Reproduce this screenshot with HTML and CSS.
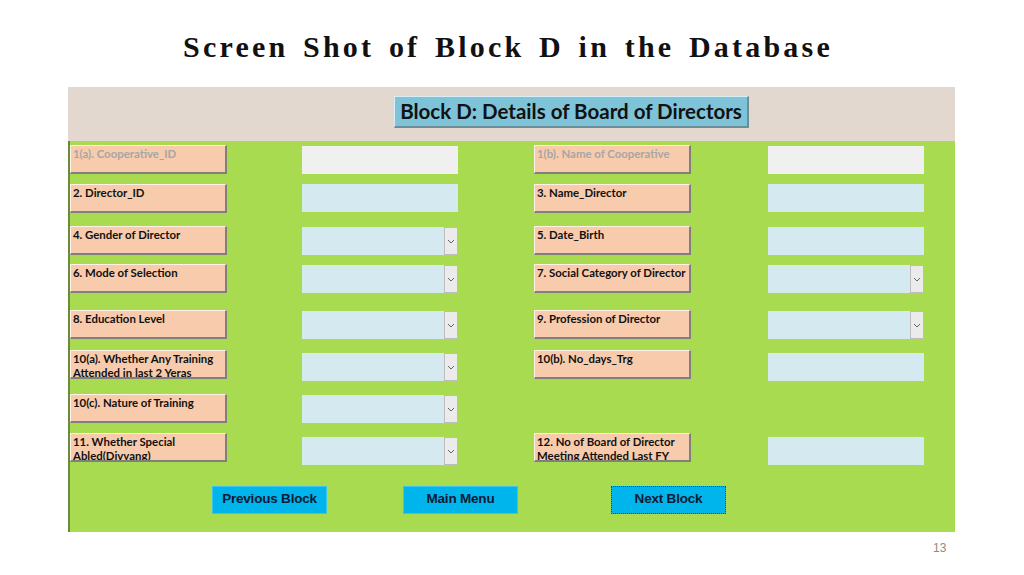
FILE: index.html
```html
<!DOCTYPE html>
<html>
<head>
<meta charset="utf-8">
<link rel="stylesheet" href="styles.css">
</head>
<body>
<h1 class="title">Screen Shot of Block D in the Database</h1>
<div class="panel">
  <div class="head">
    <div class="head-btn">Block D: Details of Board of Directors</div>
  </div>
  <div class="body">
    <div class="grid">
      <div class="lbl dis">1(a). Cooperative_ID</div>
      <div class="inp gray o1"></div>
      <div class="lbl dis">1(b). Name of Cooperative</div>
      <div class="inp gray o1"></div>

      <div class="lbl">2. Director_ID</div>
      <div class="inp"></div>
      <div class="lbl">3. Name_Director</div>
      <div class="inp"></div>

      <div class="lbl">4. Gender of Director</div>
      <div class="inp sel o1"><span class="dd"><svg width="8" height="5" viewBox="0 0 8 5"><polyline points="1,1 4,4 7,1" fill="none" stroke="#666" stroke-width="1"/></svg></span></div>
      <div class="lbl">5. Date_Birth</div>
      <div class="inp o1"></div>

      <div class="lbl">6. Mode of Selection</div>
      <div class="inp sel o1"><span class="dd"><svg width="8" height="5" viewBox="0 0 8 5"><polyline points="1,1 4,4 7,1" fill="none" stroke="#666" stroke-width="1"/></svg></span></div>
      <div class="lbl">7. Social Category of Director</div>
      <div class="inp sel o1"><span class="dd"><svg width="8" height="5" viewBox="0 0 8 5"><polyline points="1,1 4,4 7,1" fill="none" stroke="#666" stroke-width="1"/></svg></span></div>

      <div class="lbl">8. Education Level</div>
      <div class="inp sel o1"><span class="dd"><svg width="8" height="5" viewBox="0 0 8 5"><polyline points="1,1 4,4 7,1" fill="none" stroke="#666" stroke-width="1"/></svg></span></div>
      <div class="lbl">9. Profession of Director</div>
      <div class="inp sel o1"><span class="dd"><svg width="8" height="5" viewBox="0 0 8 5"><polyline points="1,1 4,4 7,1" fill="none" stroke="#666" stroke-width="1"/></svg></span></div>

      <div class="lbl">10(a). Whether Any Training Attended in last 2 Yeras</div>
      <div class="inp sel o3"><span class="dd"><svg width="8" height="5" viewBox="0 0 8 5"><polyline points="1,1 4,4 7,1" fill="none" stroke="#666" stroke-width="1"/></svg></span></div>
      <div class="lbl">10(b). No_days_Trg</div>
      <div class="inp o3"></div>

      <div class="lbl">10(c). Nature of Training</div>
      <div class="inp sel o1"><span class="dd"><svg width="8" height="5" viewBox="0 0 8 5"><polyline points="1,1 4,4 7,1" fill="none" stroke="#666" stroke-width="1"/></svg></span></div>
      <div></div>
      <div></div>

      <div class="lbl">11. Whether Special Abled(Divyang)</div>
      <div class="inp sel o4"><span class="dd"><svg width="8" height="5" viewBox="0 0 8 5"><polyline points="1,1 4,4 7,1" fill="none" stroke="#666" stroke-width="1"/></svg></span></div>
      <div class="lbl">12. No of Board of Director Meeting Attended Last FY</div>
      <div class="inp o4"></div>
    </div>
    <div class="buttons">
      <div class="btn">Previous Block</div>
      <div class="btn">Main Menu</div>
      <div class="btn focus">Next Block</div>
    </div>
  </div>
</div>
<div class="pageno">13</div>
</body>
</html>
```

FILE: styles.css
```css
html, body {
  margin: 0;
  padding: 0;
  background: #ffffff;
  width: 1024px;
  height: 575px;
  overflow: hidden;
}
.title {
  margin: 0;
  padding-top: 32px;
  height: 56px;
  box-sizing: border-box;
  text-align: center;
  font-family: "Liberation Serif", serif;
  font-weight: bold;
  font-size: 30px;
  line-height: 30px;
  letter-spacing: 3.2px;
  word-spacing: 4px;
  color: #111;
  padding-right: 8px;
}
.panel {
  margin-top: 31px;
  margin-left: 68px;
  width: 887px;
  height: 445px;
  display: flex;
  flex-direction: column;
}
.head {
  height: 54px;
  background: #e2d8d0;
  padding-top: 9px;
  padding-left: 326px;
  box-sizing: border-box;
}
.head-btn {
  width: 355px;
  height: 32px;
  box-sizing: border-box;
  background: #7ec3d7;
  border-top: 1px solid #d8eef4;
  border-left: 1px solid #d8eef4;
  border-right: 2px solid #6a8f99;
  border-bottom: 2px solid #6a8f99;
  font-family: Lato, sans-serif;
  font-weight: bold;
  font-size: 20.5px;
  line-height: 28px;
  text-align: center;
  color: #111;
}
.body {
  flex: 1;
  background: #a8db50;
  border-left: 2px solid #6c8a3c;
  box-sizing: border-box;
  padding-top: 4px;
}
.grid {
  display: grid;
  grid-template-columns: 232px 232px 234px 156px;
  grid-template-rows: 39px 42px 38px 46px 40px 44px 39px 29px;
  align-items: start;
}
.lbl {
  width: 157px;
  height: 29px;
  box-sizing: border-box;
  background: #f8cbac;
  border-top: 1px solid #fdf0e4;
  border-left: 1px solid #fdf0e4;
  border-right: 2px solid #7f7f7f;
  border-bottom: 2px solid #7f7f7f;
  font-family: Lato, sans-serif;
  font-weight: bold;
  font-size: 11.4px;
  line-height: 14px;
  padding: 1px 2px 0 2px;
  color: #111;
  overflow: hidden;
}
.lbl.dis {
  color: #a6a6a6;
}
.inp {
  width: 156px;
  height: 28px;
  background: #d4eaf0;
  position: relative;
}
.inp.gray {
  background: #f0f0f0;
}
.o1 { margin-top: 1px; }
.o3 { margin-top: 3px; }
.o4 { margin-top: 4px; }
.dd {
  position: absolute;
  right: 0;
  top: 0;
  width: 14px;
  height: 28px;
  box-sizing: border-box;
  background: #ebebeb;
  border: 1px solid #bdbdbd;
  display: flex;
  align-items: center;
  justify-content: center;
}
.buttons {
  display: flex;
  padding-left: 142px;
  margin-top: 24px;
  gap: 76px;
}
.btn {
  width: 115px;
  height: 28px;
  box-sizing: border-box;
  background: #00b4ec;
  border: 1px solid #3cc3ee;
  font-family: "Liberation Sans", Arial, sans-serif;
  font-weight: bold;
  font-size: 13.5px;
  letter-spacing: -0.2px;
  line-height: 24px;
  text-align: center;
  color: #0d1a33;
}
.btn.focus {
  margin-left: 17px;
  border: 1px dotted #1d4f7a;
}
.pageno {
  position: absolute;
  left: 933px;
  top: 541px;
  font-family: "Liberation Sans", Arial, sans-serif;
  font-size: 12px;
  color: #8c8c8c;
}
```
